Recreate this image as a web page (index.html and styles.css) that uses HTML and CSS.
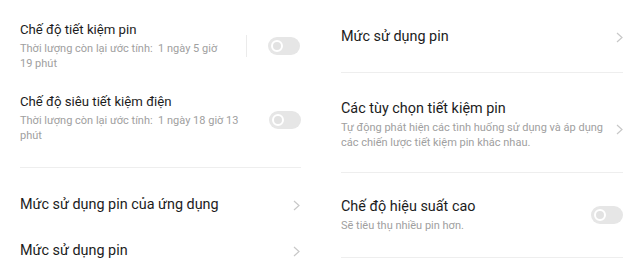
FILE: index.html
```html
<!DOCTYPE html>
<html lang="vi">
<head>
<meta charset="utf-8">
<link rel="stylesheet" href="styles.css">
</head>
<body>
<div class="screen">
  <section class="panel panel-left">
    <div class="item item-first">
      <div class="text">
        <div class="title title-sm">Chế độ tiết kiệm pin</div>
        <div class="sub">Thời lượng còn lại ước tính:&nbsp; 1 ngày 5 giờ<br>19 phút</div>
      </div>
      <span class="vsep"></span>
      <span class="toggle"><span class="knob"></span></span>
    </div>
    <div class="item item-second">
      <div class="text">
        <div class="title title-sm">Chế độ siêu tiết kiệm điện</div>
        <div class="sub">Thời lượng còn lại ước tính:&nbsp; 1 ngày 18 giờ 13<br>phút</div>
      </div>
      <span class="toggle"><span class="knob"></span></span>
    </div>
    <div class="divider div-left"></div>
    <div class="nav">
      <div class="title">Mức sử dụng pin của ứng dụng</div>
      <svg class="chev" width="7" height="11" viewBox="0 0 7 11"><path d="M1 1 L6 5.5 L1 10" fill="none" stroke="#c8c8c8" stroke-width="1.2"/></svg>
    </div>
    <div class="nav">
      <div class="title">Mức sử dụng pin</div>
      <svg class="chev" width="7" height="11" viewBox="0 0 7 11"><path d="M1 1 L6 5.5 L1 10" fill="none" stroke="#c8c8c8" stroke-width="1.2"/></svg>
    </div>
  </section>
  <section class="panel panel-right">
    <div class="nav nav-top">
      <div class="title">Mức sử dụng pin</div>
      <svg class="chev" width="7" height="11" viewBox="0 0 7 11"><path d="M1 1 L6 5.5 L1 10" fill="none" stroke="#c8c8c8" stroke-width="1.2"/></svg>
    </div>
    <div class="divider div-r1"></div>
    <div class="item item-opts">
      <div class="text text-wide">
        <div class="title">Các tùy chọn tiết kiệm pin</div>
        <div class="sub">Tự động phát hiện các tình huống sử dụng và áp dụng các chiến lược tiết kiệm pin khác nhau.</div>
      </div>
      <svg class="chev" width="7" height="11" viewBox="0 0 7 11"><path d="M1 1 L6 5.5 L1 10" fill="none" stroke="#c8c8c8" stroke-width="1.2"/></svg>
    </div>
    <div class="divider div-r2"></div>
    <div class="item item-perf">
      <div class="text">
        <div class="title">Chế độ hiệu suất cao</div>
        <div class="sub">Sẽ tiêu thụ nhiều pin hơn.</div>
      </div>
      <span class="toggle"><span class="knob"></span></span>
    </div>
    <div class="divider"></div>
  </section>
</div>
</body>
</html>
```

FILE: styles.css
```css
html, body {
  margin: 0;
  padding: 0;
  background: #ffffff;
}
body {
  font-family: Roboto, "Noto Sans", "Liberation Sans", sans-serif;
  color: #1c1c1c;
  width: 640px;
  height: 275px;
  overflow: hidden;
}
.screen {
  display: grid;
  grid-template-columns: 320px 320px;
}
.panel {
  display: flex;
  flex-direction: column;
}
.panel-left {
  padding: 20px 19px 0 20px;
}
.panel-right {
  padding: 27px 17px 0 21px;
}
.item {
  display: flex;
  align-items: center;
}
.text {
  flex: 1;
  min-width: 0;
}
.item-first .text,
.item-second .text {
  width: 226px;
  flex: none;
  white-space: nowrap;
}
.title {
  font-size: 14.4px;
  line-height: 20px;
  color: #1c1c1c;
  white-space: nowrap;
}
.title-sm {
  font-size: 13.2px;
}
.sub {
  font-size: 11px;
  line-height: 15px;
  color: #a0a0a0;
  margin-top: 1px;
}
.item-first {
  margin-bottom: 21px;
}
.vsep {
  width: 1px;
  height: 22px;
  background: #ebebeb;
  margin-left: 0;
  margin-right: 21px;
}
.item-second {
  justify-content: space-between;
  margin-bottom: 24px;
}
.toggle {
  width: 32px;
  height: 18px;
  border-radius: 9px;
  background: #e6e6e6;
  display: flex;
  align-items: center;
  padding-left: 3px;
  box-sizing: border-box;
  flex: none;
}
.item-second .toggle { margin-top: 4px; }
.knob {
  width: 12px;
  height: 12px;
  border-radius: 50%;
  border: 2.5px solid #ffffff;
  background: #e2e2e2;
  box-sizing: border-box;
}
.divider {
  height: 1px;
  background: #eeeeee;
}
.div-left {
  margin-bottom: 27px;
}
.nav {
  display: flex;
  align-items: center;
  justify-content: space-between;
  margin-bottom: 26px;
}
.chev {
  flex: none;
  margin-right: 1px;
}
.panel-right .chev { margin-right: 0; }
.nav-top {
  margin-bottom: 25px;
}
.div-r1 {
  margin-bottom: 26px;
}
.text-wide {
  max-width: 268px;
}
.item-opts {
  justify-content: space-between;
  margin-bottom: 22px;
}
.item-opts .chev { margin-top: 10px; }
.div-r2 {
  margin-bottom: 24px;
}
.item-perf {
  justify-content: space-between;
  margin-bottom: 24px;
}
```
